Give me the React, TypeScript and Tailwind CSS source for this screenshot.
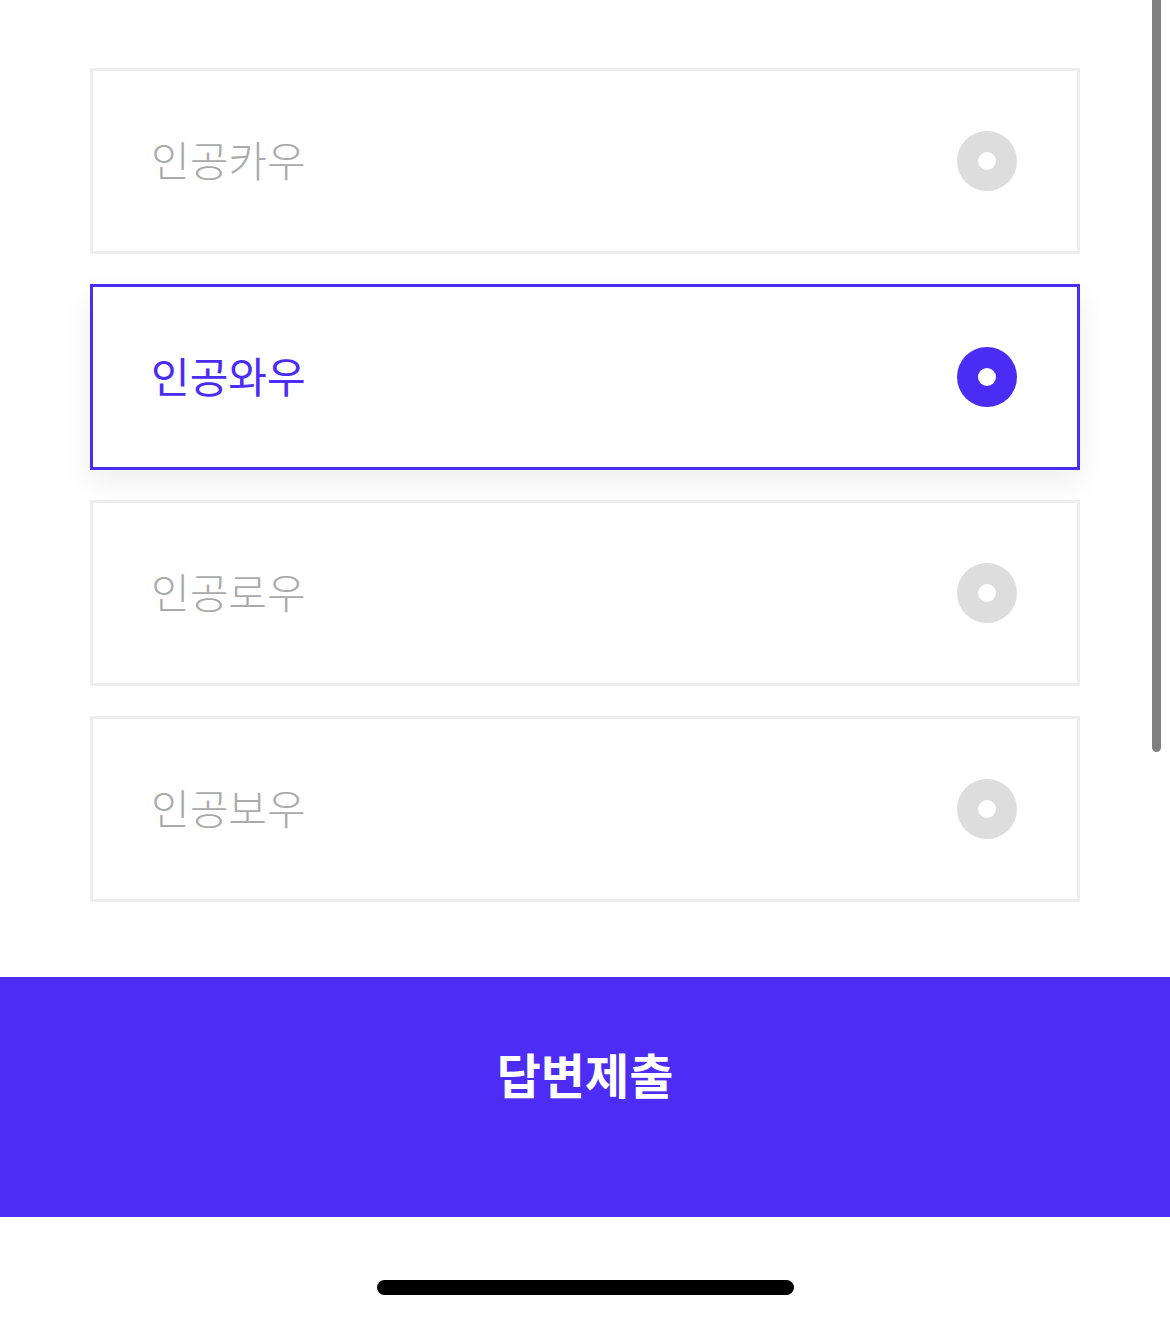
import React from "react";

const options = [
  { label: "인공카우", selected: false },
  { label: "인공와우", selected: true },
  { label: "인공로우", selected: false },
  { label: "인공보우", selected: false },
];

export default function App() {
  return (
    <div
      className="relative w-[1170px] h-[1319px] bg-white overflow-hidden"
      style={{ fontFamily: '"Noto Sans CJK KR", "Noto Sans", sans-serif' }}
    >
      <div className="flex flex-col gap-[30px] px-[90px] pt-[68px]">
        {options.map((o) => (
          <div
            key={o.label}
            className={
              o.selected
                ? "flex items-center justify-between h-[186px] border-[3px] border-[#4b2cf5] bg-white pl-[58px] pr-[60px] shadow-[0_12px_30px_rgba(0,0,0,0.07)]"
                : "flex items-center justify-between h-[186px] border-[3px] border-[#eeeeee] bg-white pl-[58px] pr-[60px]"
            }
          >
            <span
              className={
                o.selected
                  ? "text-[42px] leading-none font-normal text-[#4b2cf5] -mt-[4px]"
                  : "text-[42px] leading-none font-light text-[#aaaaaa] -mt-[4px]"
              }
            >
              {o.label}
            </span>
            <div
              className={
                o.selected
                  ? "flex items-center justify-center w-[60px] h-[60px] rounded-full bg-[#4b2cf5]"
                  : "flex items-center justify-center w-[60px] h-[60px] rounded-full bg-[#dddddd]"
              }
            >
              <div className="w-[18px] h-[18px] rounded-full bg-white" />
            </div>
          </div>
        ))}
      </div>

      <button className="mt-[75px] w-full h-[240px] bg-[#4d2cf5] flex justify-center pt-[72px]">
        <span className="text-[48px] leading-none font-bold text-white">
          답변제출
        </span>
      </button>

      <div className="flex justify-center pt-[63px]">
        <div className="w-[417px] h-[15px] rounded-full bg-black" />
      </div>

      <div className="absolute left-[1152px] top-0 w-[9px] h-[752px] bg-[#808080] rounded-b-full" />
    </div>
  );
}
